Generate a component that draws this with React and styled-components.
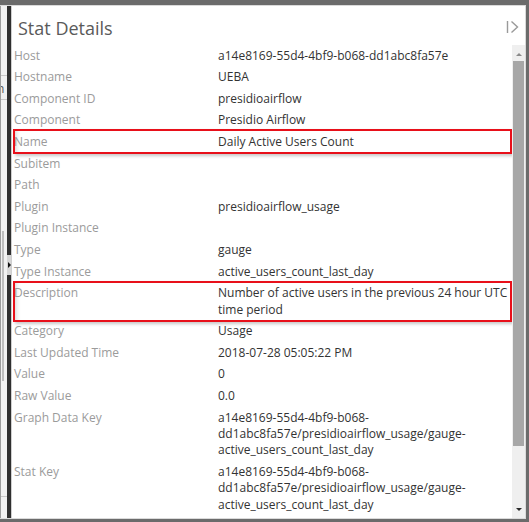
import React from "react";
import styled, { createGlobalStyle } from "styled-components";

const GraphKey =
  "a14e8169-55d4-4bf9-b068-dd1abc8fa57e/presidioairflow_usage/gauge-active_users_count_last_day";

const STAT_ROWS = [
  { label: "Host", value: "a14e8169-55d4-4bf9-b068-dd1abc8fa57e" },
  { label: "Hostname", value: "UEBA" },
  { label: "Component ID", value: "presidioairflow" },
  { label: "Component", value: "Presidio Airflow" },
  { label: "Name", value: "Daily Active Users Count", marked: true },
  { label: "Subitem", value: "" },
  { label: "Path", value: "" },
  { label: "Plugin", value: "presidioairflow_usage" },
  { label: "Plugin Instance", value: "" },
  { label: "Type", value: "gauge" },
  { label: "Type Instance", value: "active_users_count_last_day" },
  {
    label: "Description",
    value: "Number of active users in the previous 24 hour UTC time period",
    marked: true,
  },
  { label: "Category", value: "Usage" },
  { label: "Last Updated Time", value: "2018-07-28 05:05:22 PM" },
  { label: "Value", value: "0" },
  { label: "Raw Value", value: "0.0" },
  { label: "Graph Data Key", value: GraphKey },
  { label: "Stat Key", value: GraphKey },
];

function App() {
  return (
    <>
      <GlobalStyle />
      <Frame>
        <Window>
          <PageStrip>
            <span>n</span>
          </PageStrip>
          <Splitter>
            <SplitHandle />
          </Splitter>
          <Panel>
            <Header>
              <Title>Stat Details</Title>
              <CollapseButton>
                <svg width="14" height="14" viewBox="0 0 14 14">
                  <path
                    d="M1.5 1v12M5.5 1.5L11.5 7L5.5 12.5"
                    fill="none"
                    stroke="#9a9a9a"
                    strokeWidth="1.4"
                  />
                </svg>
              </CollapseButton>
            </Header>
            <Body>
              <Rows>
                {STAT_ROWS.map((row) => (
                  <Row key={row.label} $marked={row.marked}>
                    <Label>{row.label}</Label>
                    <Value>{row.value}</Value>
                  </Row>
                ))}
              </Rows>
              <ScrollTrack>
                <ScrollArrow $up />
                <ScrollThumb />
                <ScrollArrow />
              </ScrollTrack>
            </Body>
          </Panel>
        </Window>
      </Frame>
    </>
  );
}

export default App;

const GlobalStyle = createGlobalStyle`
  html, body {
    margin: 0;
    padding: 0;
  }
  body {
    background: #6b6b6b;
    font-family: "Open Sans", "Liberation Sans", sans-serif;
  }
`;

const Frame = styled.div`
  width: 529px;
  height: 522px;
  box-sizing: border-box;
  border-style: solid;
  border-color: #6b6b6b;
  border-width: 5px 3px 3px 0;
  background: #6b6b6b;
`;

const Window = styled.div`
  display: flex;
  height: 100%;
  box-sizing: border-box;
  border-top: 1px solid #dadada;
  border-right: 1px solid #dadada;
  border-bottom: 1px solid #dadada;
  background: #ffffff;
`;

const PageStrip = styled.div`
  width: 7px;
  flex-shrink: 0;
  overflow: hidden;
  box-sizing: border-box;
  border-left: 1px solid #9c9c9c;
  background:
    linear-gradient(#c8c8c8, #c8c8c8) 0 69px / 100% 1px no-repeat,
    linear-gradient(#c8c8c8, #c8c8c8) 0 93px / 100% 1px no-repeat,
    linear-gradient(#c8c8c8, #c8c8c8) 0 490px / 100% 1px no-repeat,
    linear-gradient(#bdbdbd, #bdbdbd) 1px 225px / 2px 150px no-repeat,
    #f1f1f1;
  font-size: 12px;
  color: #555;

  span {
    display: block;
    margin: 74px 0 0 -4px;
  }
`;

const Splitter = styled.div`
  width: 4px;
  flex-shrink: 0;
  background: #2f2f2f;
  display: flex;
  flex-direction: column;
  align-items: center;
  padding-top: 249px;
  box-sizing: border-box;
`;

const SplitHandle = styled.div`
  width: 4px;
  height: 20px;
  background: #d6d6d6;
  display: flex;
  align-items: center;
  justify-content: center;

  &::before {
    content: "";
    border-left: 3px solid #111;
    border-top: 3px solid transparent;
    border-bottom: 3px solid transparent;
  }
`;

const Panel = styled.div`
  flex: 1;
  display: flex;
  flex-direction: column;
  min-width: 0;
  border-left: 1px solid #cfcfcf;
`;

const Header = styled.div`
  display: flex;
  align-items: flex-start;
  justify-content: space-between;
  height: 39px;
  box-sizing: border-box;
  padding: 10px 5px 0 6px;
`;

const Title = styled.div`
  font-size: 18px;
  line-height: 24px;
  color: #5a5a5a;
  font-weight: 400;
`;

const CollapseButton = styled.div`
  width: 14px;
  height: 14px;
  margin-top: 4px;
  display: flex;
`;

const Body = styled.div`
  flex: 1;
  display: flex;
  min-height: 0;
`;

const Rows = styled.div`
  flex: 1;
  min-width: 0;
  overflow: hidden;
  padding-left: 2px;
`;

const Row = styled.div`
  position: relative;
  display: grid;
  grid-template-columns: 204px 1fr;
  padding: 2.6px 4px 2.6px 0;
  font-size: 12px;
  line-height: 16.4px;

  ${({ $marked }) =>
    $marked &&
    `
    box-shadow: inset 7px 0 5px -5px rgba(0, 0, 0, 0.18);

    &::after {
      content: "";
      position: absolute;
      top: -2px;
      bottom: -1px;
      left: -1px;
      right: 0;
      border: 2px solid #e8101a;
      box-shadow: 2px 2px 3px rgba(0, 0, 0, 0.22);
      pointer-events: none;
    }
  `}
`;

const Label = styled.div`
  color: #9b9b9b;
`;

const Value = styled.div`
  color: #333333;
`;

const ScrollTrack = styled.div`
  width: 13px;
  flex-shrink: 0;
  background: #efefef;
  display: flex;
  flex-direction: column;
  align-items: center;
`;

const ScrollArrow = styled.div`
  height: 16px;
  flex-shrink: 0;
  display: flex;
  align-items: center;
  justify-content: center;

  &::before {
    content: "";
    border-left: 3.5px solid transparent;
    border-right: 3.5px solid transparent;
    ${({ $up }) =>
      $up
        ? "border-bottom: 3px solid #8a8a8a; margin-top: 3px;"
        : "border-top: 3px solid #2a2a2a; margin-bottom: 1px;"}
  }
`;

const ScrollThumb = styled.div`
  width: 11px;
  height: 385px;
  background: #a7a7a7;
  flex-shrink: 0;
  margin-bottom: auto;
`;
